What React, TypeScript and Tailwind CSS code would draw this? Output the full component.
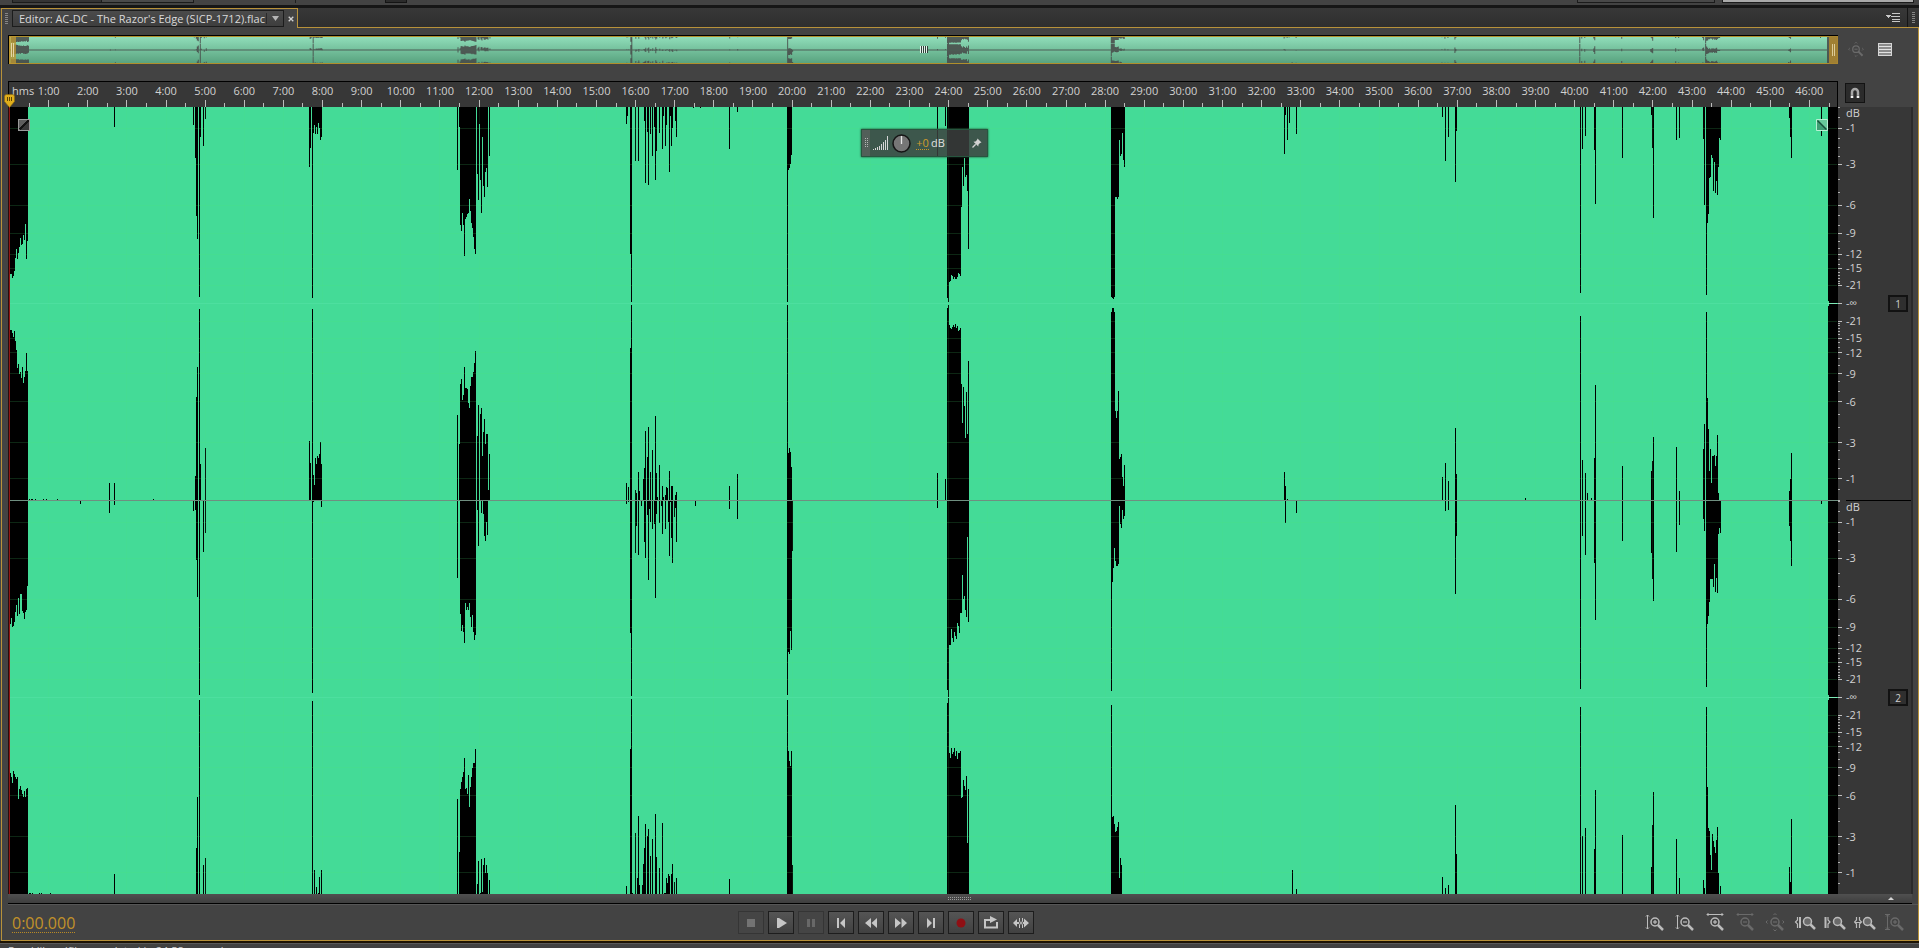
import React from 'react';

type Run = [number, ...number[]];

// Each run is a starting column followed by the headroom left by each successive column.
const CH1_UPPER: Run[] = [
  [10, 167, 167, 171, 169, 164, 151, 142, 152, 146, 140, 131, 138, 137, 128, 133, 117, 152, 134],
  [114, 20],
  [193, 18, 0, 51, 109, 132, 0, 190, 30, 0, 0, 39, 0, 12],
  [309, 60, 41, 0, 191, 26, 18, 27, 20, 27, 16, 21, 33, 30],
  [457, 63, 0, 20, 118, 124, 106, 118, 149, 112, 110, 107, 106, 92, 104, 116, 121, 130, 142, 147, 0, 67, 93, 17, 73, 106, 30, 79, 90, 65, 61, 80, 0, 49],
  [626, 17, 9, 0, 0, 147, 195, 0, 0, 0, 54, 0, 0, 54],
  [644, 14, 76, 0, 25, 78, 0, 27, 0, 49, 0, 20, 73, 44, 0, 0, 26, 0, 0, 42, 9, 0, 39, 18, 0, 0, 65, 9, 39, 21, 0, 0, 14, 30],
  [693, 1],
  [700, 1],
  [729, 42],
  [737, 5],
  [787, 195, 63, 61, 57, 48],
  [937, 50],
  [945, 19, 0, 191, 195, 175, 174, 168, 169, 172, 170, 172, 172, 170, 166, 167, 169, 100, 60, 79, 51, 70, 68, 84, 142],
  [1111, 190, 191, 192, 190, 90, 90, 92, 90, 33, 49, 47, 26, 53, 60],
  [1284, 47, 8, 0, 33, 0, 16],
  [1296, 27],
  [1442, 10],
  [1445, 54],
  [1448, 30],
  [1455, 75, 24],
  [1580, 186, 0, 42, 0, 0, 29],
  [1594, 43, 97],
  [1622, 51],
  [1651, 8, 41, 111],
  [1676, 33, 0, 0, 31],
  [1703, 32, 98, 0, 188, 116, 107, 71, 70, 48, 51, 84, 55, 86, 74, 88, 60, 31, 33],
  [1789, 11, 30, 51],
  [1821, 29],
];

const CH1_LOWER: Run[] = [
  [10, 170, 170, 167, 163, 169, 159, 150, 132, 136, 126, 128, 122, 133, 117, 123, 129, 147, 129],
  [29, 1, 0, 1, 1, 0, 0, 1],
  [43, 1, 0, 0, 1],
  [57, 1],
  [109, 17, 0, 0, 0, 0, 17],
  [153, 1],
  [195, 24, 103, 133, 0, 191, 36, 0, 0, 0, 0, 52],
  [309, 59, 37, 0, 191, 25, 15, 42, 36, 44, 42, 46, 58, 36],
  [457, 85, 0, 56, 116, 121, 100, 105, 133, 112, 112, 111, 97, 92, 114, 123, 123, 128, 137, 149, 0, 64, 95, 0, 86, 92, 44, 68, 81, 56, 66, 66, 10, 46],
  [626, 17, 0, 13, 0, 152, 195, 0, 0, 0, 10, 7, 0, 28, 9],
  [643, 21, 32, 69, 0, 43, 73, 0, 28, 0, 50, 0, 0, 84, 27, 3, 0, 35, 0, 0, 14, 3, 0, 5, 13, 12, 0, 29, 0, 14, 14, 0, 0, 5, 8],
  [729, 14],
  [737, 26],
  [787, 195, 47, 52, 48, 33],
  [937, 27],
  [945, 21, 0, 192, 195, 175, 172, 171, 173, 175, 173, 176, 172, 174, 169, 170, 172, 116, 77, 113, 94, 62, 108, 66, 139],
  [1111, 188, 192, 192, 188, 89, 82, 89, 109, 41, 43, 46, 23, 14, 35],
  [1284, 28, 14, 0, 1],
  [1442, 23, 0, 0, 37, 0, 0, 19],
  [1455, 72, 26],
  [1525, 2],
  [1580, 184, 0, 40, 0, 0, 27, 0, 7, 0, 0, 0, 2],
  [1594, 42, 115],
  [1622, 34],
  [1651, 29, 39, 63],
  [1676, 53, 0, 0, 9],
  [1703, 51, 76, 0, 188, 102, 71, 29, 51, 17, 44, 44, 45, 34, 44, 65, 7],
  [1789, 9, 21, 47],
];

const CH2_UPPER: Run[] = [
  [10, 123, 117, 126, 125, 121, 111, 104, 115, 97, 113, 93, 93, 110, 112, 118, 111, 109, 85],
  [80, 3],
  [109, 12, 0, 0, 0, 0, 4],
  [193, 10, 0, 9, 59, 96, 0, 194, 0, 0, 0, 51, 0, 32],
  [312, 192, 1],
  [321, 6],
  [457, 77, 0, 0, 113, 130, 124, 131, 142, 102, 109, 106, 109, 102, 116, 126, 114, 131, 139, 134, 0, 9, 45, 0, 0, 12, 0, 13, 35, 40, 21, 34],
  [626, 3, 0, 1, 0, 132, 195, 0, 0, 0, 52, 25, 0, 54, 0, 0, 5],
  [644, 41, 57, 0, 14, 79, 8, 21, 0, 28, 0, 23, 97, 13, 0, 0, 22, 0, 5, 33, 0, 0, 28, 0, 0, 21, 55, 1, 37, 62, 0, 16, 7, 41],
  [695, 5],
  [729, 8],
  [737, 18],
  [787, 194, 151, 153, 130, 149, 50],
  [937, 7],
  [947, 189, 196, 144, 144, 128, 137, 141, 131, 135, 138, 122, 125, 132, 112, 112, 74, 98, 95, 109, 116, 36, 121],
  [1111, 190, 81, 67, 47, 60, 65, 65, 63, 5, 23, 27, 9, 18, 15],
  [1285, 22],
  [1296, 12],
  [1445, 10, 0, 0, 9],
  [1455, 93, 35],
  [1580, 188, 0, 35, 0, 0, 54],
  [1594, 62, 119],
  [1622, 40],
  [1651, 52, 78, 100],
  [1676, 51, 0, 0, 24],
  [1703, 18, 30, 0, 186, 123, 115, 101, 78, 78, 78, 86, 63, 91, 77, 92, 33, 27, 32],
  [1789, 25, 40, 65],
  [1821, 3],
];

const CH2_LOWER: Run[] = [
  [10, 121, 117, 111, 123, 120, 117, 115, 117, 95, 105, 108, 104, 100, 97, 103, 97, 105, 106],
  [29, 1, 1, 0, 1],
  [39, 1, 0, 1],
  [50, 1],
  [114, 20],
  [196, 46, 97, 0, 194, 0, 0, 0, 29, 0, 36],
  [312, 193, 0, 24, 0, 7, 0, 1, 17, 0, 24],
  [457, 95, 0, 42, 105, 112, 117, 122, 136, 105, 106, 100, 119, 87, 107, 117, 126, 131, 131, 145, 0, 10, 33, 0, 1, 35, 2, 29, 36, 21, 29, 21, 0, 14],
  [626, 8, 0, 0, 0, 145, 195, 1, 0, 0, 61, 0, 16, 78, 9, 0, 0, 9, 30, 46, 70, 0, 58, 65, 0, 38, 0, 55, 0, 0, 80, 37, 0, 0, 26, 0, 0, 71, 0, 1, 1, 16, 11, 20, 18, 0, 20, 30, 0, 12, 0, 16],
  [729, 15],
  [787, 194, 143, 133, 128, 143, 29],
  [947, 191, 196, 141, 136, 146, 140, 142, 146, 138, 143, 135, 141, 141, 143, 96, 97, 114, 108, 104, 118, 51, 105],
  [1111, 189, 77, 78, 70, 62, 63, 67, 72, 16, 36, 29],
  [1292, 24, 0, 0, 0, 5],
  [1442, 17, 0, 0, 6, 0, 0, 9],
  [1455, 89, 40],
  [1580, 187, 0, 58, 0, 0, 66],
  [1594, 45, 104],
  [1622, 59],
  [1651, 27, 69, 102],
  [1676, 55, 0, 0, 16],
  [1703, 14, 6, 0, 187, 107, 66, 63, 39, 24, 60, 53, 47, 41, 54, 67, 21, 0, 8],
  [1789, 27, 12, 75],
];

function silhouette(runs: Run[], base: number, dir: 1 | -1): string {
  return runs
    .map(([x, ...depths]) =>
      depths.map((d, i) => (d ? `M${x + i} ${base}v${dir * d}h1V${base}z` : '')).join(''),
    )
    .join('');
}

const GAPS = [
  silhouette(CH1_UPPER, 107, 1),
  silhouette(CH1_LOWER, 500, -1),
  silhouette(CH2_UPPER, 501, 1),
  silhouette(CH2_LOWER, 894, -1),
  'M1828 107h10V303h-9v-2h-1zM1828 306h1v-2h9V697h-9v-2h-1zM1828 700h1v-2h9V894h-10z',
].join('');

const MINUTE = 39.13;
const MINUTES = Array.from({ length: 46 }, (_, i) => i + 1);
const minuteX = (m: number) => Math.floor(9.5 + MINUTE * m);

const CENTERS = [303.5, 697.5];
const MAJOR_DB = [1, 3, 6, 9, 12, 15, 21];
const MINOR_DB = [0, 0.5, 1.5, 2, 2.5, 4, 5, 7, 8, 10, 11, 13, 14, 16, 17, 18, 19, 20];
const dbOffset = (db: number) => 196.5 * Math.pow(10, -db / 20);
const dbRows = (list: number[]) =>
  CENTERS.flatMap((c) => list.flatMap((db) => [Math.floor(c - dbOffset(db)), Math.floor(c + dbOffset(db))]));

const SCALE: [string, number][] = [
  ['dB', 6], ['-1', 21], ['-3', 57], ['-6', 98], ['-9', 126], ['-12', 147], ['-15', 161], ['-21', 178],
  ['-∞', 196], ['-21', 214], ['-15', 231], ['-12', 246], ['-9', 267], ['-6', 295], ['-3', 336], ['-1', 372],
];

function Grip({ className }: { className: string }) {
  return (
    <svg className={className} width="3" height="11" shapeRendering="crispEdges" aria-hidden="true">
      <path d="M0 .5h3M0 2.5h3M0 4.5h3M0 6.5h3M0 8.5h3M0 10.5h3" stroke="#858585" strokeWidth="1" />
    </svg>
  );
}

function TopStrip() {
  return (
    <div className="flex h-[5px] shrink-0 bg-[#434343] pl-3">
      <div className="h-[3px] w-[90px] border-x border-b border-[#1b1b1b] bg-[#343434]" />
      <div className="h-[3px] w-[92px] border-r border-b border-[#1b1b1b] bg-[#4a4a4a]" />
      <div className="ml-[101px] h-[3px] w-px bg-[#1f1f1f]" />
      <div className="ml-[89px] h-[3px] w-[22px] border-x border-b border-[#141414] bg-[#2b2b2b]" />
      <div className="ml-auto h-[3px] w-[138px] border-x border-b border-[#1b1b1b] bg-[#484848]" />
      <div className="mr-[5px] ml-[7px] h-[3px] w-[192px] border-x border-b border-[#1b1b1b] bg-[#a9a9a9]" />
    </div>
  );
}

function TabBar() {
  return (
    <header className="flex h-5 shrink-0">
      <div className="ml-px flex w-[297px] shrink-0 items-center border-t border-r border-l border-[#b8923a] bg-[#434343]">
        <Grip className="mr-1 ml-[3px]" />
        <div className="flex h-[17px] w-[272px] items-center border border-[#1c1c1c] bg-linear-to-b from-[#4b4b4b] to-[#3e3e3e]">
          <span className="ml-1.5 flex-1 text-[11px] leading-[14px] whitespace-nowrap text-[#dadada]">
            Editor: AC-DC - The Razor's Edge (SICP-1712).flac
          </span>
          <button type="button" aria-label="Choose file" className="flex h-[11px] w-[17px] items-center justify-center border-l border-[#2b2b2b]">
            <svg width="7" height="5" aria-hidden="true"><path d="M0 0h7L3.5 5z" fill="#b5b5b5" /></svg>
          </button>
        </div>
        <button type="button" aria-label="Close tab" className="flex h-4 flex-1 items-center justify-center">
          <svg width="6" height="6" aria-hidden="true"><path d="M.7.7l4.6 4.6M5.3.7L.7 5.3" stroke="#d0d0d0" strokeWidth="1.3" /></svg>
        </button>
      </div>
      <div className="flex flex-1 items-center justify-end border-b border-[#b8923a] bg-linear-to-b from-[#383838] to-[#2e2e2e]">
        <button type="button" aria-label="Panel menu" className="mr-[7px] h-3">
          <svg width="14" height="11" shapeRendering="crispEdges" aria-hidden="true">
            <path d="M0 3h5v1H4v1H3v1H2V5H1V4H0z" fill="#c8c8c8" />
            <path d="M6 1.5h8M5 4.5h9M6 7.5h8M6 9.5h8" stroke="#c8c8c8" />
          </svg>
        </button>
        <div className="h-full w-px bg-[#151515]" />
        <Grip className="mx-1" />
      </div>
    </header>
  );
}

function Overview() {
  return (
    <div className="flex h-[29px] shrink-0">
      <div className="relative min-w-0 flex-1 border-t border-l border-black">
        <div className="h-7 border border-[#b08f2c] bg-linear-to-b from-[#90deba] to-[#59a37f]">
          <svg className="block h-[26px] w-full" viewBox="9 107 1829 787" preserveAspectRatio="none" role="img" aria-label="File overview">
            <path d={GAPS} fill="#474747" fillOpacity="0.85" />
            <path d="M9 500.5H1838" stroke="#4c5f56" strokeWidth="30" />
          </svg>
        </div>
        <button type="button" aria-label="Range start" className="absolute top-0 left-0 flex h-7 w-[7px] items-center justify-center gap-px bg-[#c39a30]/75">
          <i className="h-[14px] w-px bg-[#e6d6a6]" />
          <i className="h-[14px] w-px bg-[#e6d6a6]" />
        </button>
        <button type="button" aria-label="Range end" className="absolute top-0 right-0 flex h-7 w-[9px] items-center justify-center gap-px bg-[#a88430]/90">
          <i className="h-[12px] w-px bg-[#dccb98]" />
          <i className="h-[12px] w-px bg-[#dccb98]" />
        </button>
        <svg className="absolute top-[10px] left-[49.8%]" width="8" height="7" shapeRendering="crispEdges" aria-hidden="true">
          <path d="M.5 0v7M2.5 0v7M4.5 0v7M6.5 0v7" stroke="#e6f5ee" />
          <path d="M1.5 0v7M3.5 0v7M5.5 0v7M7.5 0v7" stroke="#2f4038" />
        </svg>
      </div>
      <div className="flex w-20 items-center pl-[9px]">
        <button type="button" aria-label="Zoom out full" disabled className="mr-[13px]">
          <ZoomIcon kind="full" size={18} />
        </button>
        <button type="button" aria-label="Panel layout">
          <svg width="14" height="14" shapeRendering="crispEdges" aria-hidden="true">
            <path d="M0 0h14v13H0z" fill="#d6d6d6" />
            <path d="M1 1h12v2H1zM1 4h12v2H1zM1 7h12v2H1zM1 10h12v2H1z" fill="#8b8b8b" />
            <path d="M1 3.5h12M1 6.5h12M1 9.5h12" stroke="#e2e2e2" />
          </svg>
        </button>
      </div>
    </div>
  );
}

function Ruler() {
  return (
    <div className="mt-[17px] flex h-[26px] shrink-0">
      <div className="relative min-w-0 flex-1 border-t border-l border-black bg-[#373737]">
        <div className="flex h-full border-r border-black pt-0.5 text-[11px] leading-[14px] text-[#d2d2d2]">
          <span className="w-[1.1%] shrink-0 pl-[3px] whitespace-nowrap">hms</span>
          {MINUTES.map((m) => (
            <span key={m} className="flex w-[2.141%] shrink-0 justify-center whitespace-nowrap">{m}:00</span>
          ))}
        </div>
        <svg className="absolute bottom-0 left-0 h-[7px] w-full" viewBox="9 99 1829 7" preserveAspectRatio="none" shapeRendering="crispEdges" aria-hidden="true">
          {[...MINUTES.map((m) => <path key={m} d={`M${minuteX(m)} 99h1v7h-1z`} fill="#bdbdbd" />),
            ...[0, ...MINUTES].map((m) => <path key={m + 0.5} d={`M${minuteX(m + 0.5)} 102h1v4h-1z`} fill="#bdbdbd" />)]}
        </svg>
        <svg className="absolute -bottom-px -left-[5px] z-10" width="11" height="14" aria-hidden="true">
          <path d="M.5 2.5Q.5.5 2.5.5h6Q10.5.5 10.5 2.5v5L5.5 13.5L.5 7.5z" fill="#e0ae1c" stroke="#8d6a0c" strokeWidth=".6" />
          <path d="M3.5 3v4M5.5 3v4M7.5 3v4" stroke="#5f4606" strokeWidth="1" />
        </svg>
      </div>
      <div className="w-20 pt-0.5 pl-[7px]">
        <button type="button" aria-label="Toggle snapping" className="flex h-5 w-5 items-center justify-center border border-[#131313] bg-[#2b2b2b]">
          <svg width="10" height="12" aria-hidden="true">
            <path d="M2 8V5a3 3 0 0 1 6 0v3" fill="none" stroke="#a7a7a7" strokeWidth="2.5" />
            <path d="M.7 8.5h2.6V11H.7zM6.7 8.5h2.6V11H6.7z" fill="#f2f2f2" />
          </svg>
        </button>
      </div>
    </div>
  );
}

function Waveform() {
  return (
    <div className="relative min-w-0 flex-1 border-l border-[#2a0c0c]">
      <svg className="absolute inset-0 h-full w-full bg-[#44db97]" viewBox="9 107 1829 787" preserveAspectRatio="none" shapeRendering="crispEdges" role="img" aria-label="Two channel waveform">
        <path d={GAPS} fill="#000" />
        <g fill="#50e878" fillOpacity="0.17">
          {dbRows(MAJOR_DB).map((y, i) => <rect key={i} x="10" y={y} width="1827" height="1" />)}
        </g>
        <g fill="#50e878" fillOpacity="0.1">
          {MINUTES.map((m) => <rect key={m} x={minuteX(m)} y="107" width="1" height="787" />)}
        </g>
        <path d="M10 303.5H1828M10 697.5H1828" stroke="#4ddf9f" />
        <path d="M1828 303.5H1837M1828 697.5H1837" stroke="#7fe9b8" />
        <path d="M9 500.5H1838" stroke="#6f8f80" />
        <path d="M9.5 107V894" stroke="#8e1616" />
      </svg>
      <svg className="absolute top-3 left-[9px]" width="12" height="12" shapeRendering="crispEdges" role="img" aria-label="Fade in">
        <path d="M0 0h12v12H0z" fill="#9a9a9a" />
        <path d="M1 1h10v10H1z" fill="#5d5d5d" />
        <path d="M1 11L11 1v10z" fill="#383838" />
        <path d="M1.5 10.5l9-9" stroke="#111" strokeWidth="1.5" />
      </svg>
      <svg className="absolute top-3 right-[10px]" width="12" height="12" role="img" aria-label="Fade out">
        <path d="M.5.5h11v11H.5z" fill="#67c99a" stroke="#b6f0d4" />
        <path d="M1 1L11 11H1z" fill="#3f9d73" />
        <path d="M1.5 1.5l9 9" stroke="#16513a" strokeWidth="1.5" />
      </svg>
      <div className="absolute top-[22px] left-[46.6%] flex h-7 w-[127px] items-center border border-[#27553f] bg-[#3c3f3e]/85 shadow-[0_0_2px_#1f3c2e]">
        <div className="flex h-full w-2 items-center justify-center bg-[#5b625f]/70">
          <svg width="3" height="10" shapeRendering="crispEdges" aria-hidden="true">
            <path d="M.5 0v10M2.5 0v10" stroke="#b5b5b5" strokeDasharray="1 1" />
          </svg>
        </div>
        <svg className="ml-[3px]" width="16" height="14" shapeRendering="crispEdges" aria-hidden="true">
          <path d="M0 13h1v1H0zM2 12h1v2H2zM4 11h1v3H4zM6 10h1v4H6zM8 8h1v6H8zM10 6h1v8h-1zM12 4h1v10h-1zM14 0h1v14h-1z" fill="#d5d5d5" />
        </svg>
        <button type="button" aria-label="Adjust amplitude" className="ml-[3px]">
          <svg className="block" width="19" height="19" aria-hidden="true">
            <circle cx="9.5" cy="9.5" r="8.5" fill="#767676" stroke="#151515" strokeWidth="1.5" />
            <path d="M9.5 2v8" stroke="#e6e6e6" strokeWidth="1.3" />
          </svg>
        </button>
        <span className="ml-[5px] border-b border-dotted border-[#c9962b] text-[11px] leading-[13px] text-[#d09c2c]">+0</span>
        <span className="ml-0.5 text-[11px] leading-[14px] text-[#e0e0e0]">dB</span>
        <button type="button" aria-label="Pin" className="mr-[5px] ml-auto">
          <svg className="block" width="10" height="10" aria-hidden="true">
            <path d="M5.5.5L9.5 4.5L8 5L6.5 6.5L6.3 8.5L1.5 3.7L3.5 3.5L5 2z" fill="#d2d2d2" />
            <path d="M3.7 6.3L.5 9.5" stroke="#d2d2d2" strokeWidth="1.3" />
          </svg>
        </button>
      </div>
    </div>
  );
}

function ChannelScale({ channel }: { channel: number }) {
  return (
    <section aria-label={`Channel ${channel}`} className={channel === 2 ? 'flex min-h-0 flex-1 border-t border-black' : 'flex min-h-0 flex-1'}>
      <div className="flex flex-1 flex-col text-[11px] leading-3 text-[#d2d2d2]">
        {SCALE.map(([label, at], i) => (
          <div key={at} className="flex min-h-0 items-end" style={{ flex: `${at - (i ? SCALE[i - 1][1] : 0)} 1 0px` }}>
            <span className="translate-y-1/2">{label}</span>
          </div>
        ))}
        <div style={{ flex: '21 1 0px' }} />
      </div>
      <div className="mr-[3px] flex items-center">
        <button type="button" aria-label={`Toggle channel ${channel}`} className="h-[17px] w-5 border-2 border-[#121212] bg-[#2f2f2f] text-[10px] leading-[12px] text-[#d0d0d0]">
          {channel}
        </button>
      </div>
    </section>
  );
}

function Scale() {
  return (
    <div className="flex w-[75px] shrink-0 border-r-2 border-[#2a2a2a] bg-[#373737]">
      <svg className="h-full w-2" viewBox="0 107 8 787" preserveAspectRatio="none" shapeRendering="crispEdges" aria-hidden="true">
        {dbRows(MAJOR_DB).map((y, i) => <rect key={i} x="0" y={y} width="4" height="1" fill="#c0c0c0" />)}
        {CENTERS.map((y) => <rect key={y} x="0" y={y - 0.5} width="4" height="1" fill="#c0c0c0" />)}
        {dbRows(MINOR_DB).map((y, i) => <rect key={i} x="0" y={y} width="2" height="1" fill="#b0b0b0" />)}
      </svg>
      <div className="flex flex-1 flex-col">
        <ChannelScale channel={1} />
        <ChannelScale channel={2} />
      </div>
    </div>
  );
}

const TRANSPORT: { label: string; off?: boolean; icon: React.ReactNode }[] = [
  { label: 'Stop', off: true, icon: <path d="M5 3h8v8H5z" fill="#737373" /> },
  { label: 'Play', icon: <path d="M5 2v10h2L15 7L7 2z" fill="#c6c6c6" /> },
  { label: 'Pause', off: true, icon: <path d="M5 3h3v8H5zM10 3h3v8h-3z" fill="#686868" /> },
  { label: 'Move to previous', icon: <path d="M5 2h2v10H5zM13 2v10L8 7z" fill="#c6c6c6" /> },
  { label: 'Rewind', icon: <path d="M9 2v10L3 7zM15 2v10L9.5 7z" fill="#c6c6c6" /> },
  { label: 'Fast forward', icon: <path d="M3 2v10l6-5zM9.5 2v10L15 7z" fill="#c6c6c6" /> },
  { label: 'Move to next', icon: <path d="M5 2v10l5-5zM11 2h2v10h-2z" fill="#c6c6c6" /> },
  { label: 'Record', icon: <circle cx="9" cy="7" r="4.5" fill="#8f0f14" /> },
  {
    label: 'Loop playback',
    icon: <><path d="M7 4H3v7.5h12V6" fill="none" stroke="#c6c6c6" strokeWidth="2" /><path d="M8 0v7l7-3.5z" fill="#c6c6c6" /><path d="M6 4h3" stroke="#c6c6c6" strokeWidth="2" /></>,
  },
  {
    label: 'Skip selection',
    icon: <><path d="M1 7l4-4v8zM12 2.5v9L17 7z" fill="#c6c6c6" /><path d="M4 7h3M11 7h2" stroke="#c6c6c6" strokeWidth="2" /><path d="M7.5 2v3l1 2l-1 2v3M10.5 2v3l-1 2l1 2v3" fill="none" stroke="#c6c6c6" /></>,
  },
];

type ZoomKind = 'ampIn' | 'ampOut' | 'timeIn' | 'timeOut' | 'full' | 'inPoint' | 'outPoint' | 'selection' | 'reset';

function ZoomIcon({ kind, size = 22 }: { kind: ZoomKind; size?: number }) {
  const dim = kind === 'timeOut' || kind === 'full' || kind === 'reset';
  const color = dim ? '#6a6a6a' : '#bcbcbc';
  const plus = kind === 'ampIn' || kind === 'timeIn' || kind === 'reset';
  const minus = kind === 'ampOut' || kind === 'timeOut' || kind === 'full';
  const lens = plus || minus
    ? <><circle cx="11" cy="10" r="4" strokeWidth="1.5" /><path d="M14 13L19 18" strokeWidth="2.5" /></>
    : <><circle cx="13.5" cy="9.5" r="4" strokeWidth="1.5" fill="#6a6a6a" /><path d="M16.5 12.5L21 17" strokeWidth="2.5" /></>;
  return (
    <svg className="block" width={size} height={size} viewBox="0 0 22 22" fill="none" stroke={color} aria-hidden="true">
      {lens}
      {(plus || minus) && <path d="M9 10h4" strokeWidth="1.2" />}
      {plus && <path d="M11 8v4" strokeWidth="1.2" />}
      {(kind === 'ampIn' || kind === 'ampOut' || kind === 'reset') && <path d="M3.5 3v14M2 4.5L3.5 3L5 4.5M2 15.5L3.5 17L5 15.5" />}
      {kind === 'reset' && <path d="M1 2.5h5M1 17.5h5" />}
      {(kind === 'timeIn' || kind === 'timeOut') && <path d="M3 2.5h16M4.5 1L3 2.500L4.5 4M17.5 1L19 2.5L17.5 4" />}
      {kind === 'full' && <path d="M9.5 3L11 1.5L12.5 3M9.5 17.5L11 19L12.5 17.5M3.5 8.5L2 10L3.5 11.5M18.5 8.5L20 10L18.5 11.5" />}
      {kind === 'inPoint' && <><path d="M3.500 5v3L1.5 10L3.5 12v4" strokeWidth="1.2" /><path d="M6 5v11" strokeWidth="2" /></>}
      {kind === 'outPoint' && <><path d="M1.5 5v11" strokeWidth="2" /><path d="M4 5v3L6 10L4 12v4" strokeWidth="1.2" /></>}
      {kind === 'selection' && <path d="M2.5 5v3L.5 10L2.5 12v4M5.500 5v3L7.5 10L5.5 12v4M1 10.5h6" strokeWidth="1.2" />}
    </svg>
  );
}

const ZOOMS: [ZoomKind, string][] = [
  ['ampIn', 'Zoom in amplitude'],
  ['ampOut', 'Zoom out amplitude'],
  ['timeIn', 'Zoom in time'],
  ['timeOut', 'Zoom out time'],
  ['full', 'Zoom out full on both axes'],
  ['inPoint', 'Zoom in at in point'],
  ['outPoint', 'Zoom in at out point'],
  ['selection', 'Zoom to selection'],
  ['reset', 'Zoom reset amplitude'],
];

function Footer() {
  return (
    <footer className="flex h-9 shrink-0 items-center border-t border-[#565656]">
      <div className="w-[38.2%] pl-1">
        <button type="button" aria-label="Current time" className="border-b border-dotted border-[#b98a25] text-[16px] leading-[17px] text-[#c2922a]">
          0:00.000
        </button>
      </div>
      <div className="flex gap-1">
        {TRANSPORT.map(({ label, off, icon }) => (
          <button
            key={label}
            type="button"
            aria-label={label}
            disabled={off}
            className={off
              ? 'flex h-[23px] w-[26px] items-center justify-center border border-[#353535] bg-[#454545]'
              : 'flex h-[23px] w-[26px] items-center justify-center border border-[#1d1d1d] bg-linear-to-b from-[#555555] to-[#414141]'}
          >
            <svg width="18" height="14" aria-hidden="true">{icon}</svg>
          </button>
        ))}
      </div>
      <div className="mr-3 ml-auto flex gap-2">
        {ZOOMS.map(([kind, label]) => (
          <button key={kind} type="button" aria-label={label}><ZoomIcon kind={kind} /></button>
        ))}
      </div>
    </footer>
  );
}

export default function App() {
  return (
    <div className="flex h-screen flex-col overflow-hidden bg-[#434343] font-['Open_Sans','Noto_Sans',sans-serif]">
      <TopStrip />
      <div className="h-[3px] shrink-0 bg-[#161616]" />
      <TabBar />
      <main className="ml-px flex min-h-0 flex-1 flex-col border-r border-b border-l border-[#b8923a] bg-[#434343] pt-[7px] pl-1.5">
        <Overview />
        <Ruler />
        <div className="flex min-h-0 flex-1">
          <Waveform />
          <Scale />
          <div className="w-[5px] shrink-0" />
        </div>
        <div className="relative mr-1.5 flex h-[10px] shrink-0 items-center justify-end border-b border-black bg-linear-to-b from-[#505050] to-[#3e3e3e] pr-[18px]">
          <svg className="absolute top-[3px] left-[49.35%]" width="24" height="3" shapeRendering="crispEdges" aria-hidden="true">
            <path d="M0 .5h24M0 2.5h24" stroke="#9a9a9a" strokeDasharray="1 1" />
          </svg>
          <svg width="6" height="3" aria-hidden="true"><path d="M0 3L3 0L6 3z" fill="#d5d5d5" /></svg>
        </div>
        <Footer />
      </main>
      <div className="h-0.5 shrink-0 bg-[#1c1305]" />
      <div className="h-[5px] shrink-0 overflow-hidden border-t border-[#5a5a5a] bg-[#414141] pl-2 text-[11px] leading-[14px] text-[#d0d0d0]">
        Read libsndfile completed in 24,58 seconds
      </div>
    </div>
  );
}
